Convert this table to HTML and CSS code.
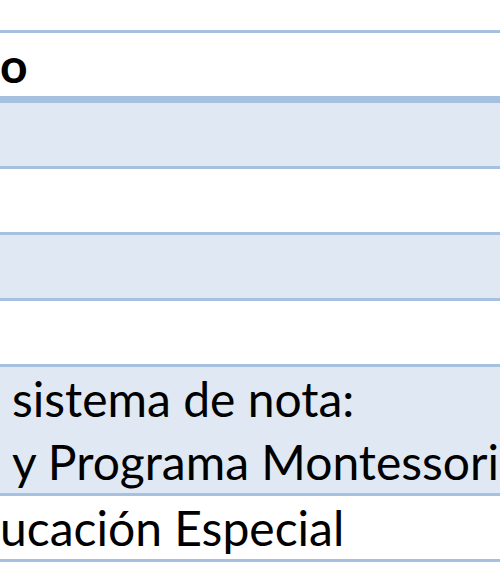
FILE: index.html
```html
<!DOCTYPE html>
<html lang="es">
<head>
    <meta charset="UTF-8">
    <meta name="viewport" content="width=device-width, initial-scale=1.0">
    <title>Tabla</title>
    <link rel="stylesheet" href="styles.css">
</head>
<body>
    <div class="table">
        <div class="row header"><span class="cell flush">o</span></div>
        <div class="row shaded"><span class="cell"></span></div>
        <div class="row"><span class="cell"></span></div>
        <div class="row shaded"><span class="cell"></span></div>
        <div class="row"><span class="cell"></span></div>
        <div class="row shaded"><span class="cell">sistema de nota:<br>y Programa Montessori</span></div>
        <div class="row"><span class="cell flush">ucación Especial</span></div>
    </div>
</body>
</html>
```

FILE: styles.css
```css
html, body {
    margin: 0;
    overflow: hidden;
    background: #fff;
}

body {
    padding-top: 30px;
    font-family: 'Lato', 'Calibri', sans-serif;
    font-size: 48px;
    color: #000;
}

.table {
    border-top: 3px solid #a6c0df;
}

.row {
    min-height: 63px;
    line-height: 63px;
    border-bottom: 3px solid #a6c0df;
    white-space: nowrap;
}

.row.header {
    font-weight: bold;
    border-bottom-width: 7px;
}

.row.shaded {
    background-color: #dfe8f3;
}

.cell {
    display: block;
    padding-left: 12px;
}

.cell.flush {
    padding-left: 0;
}
```
